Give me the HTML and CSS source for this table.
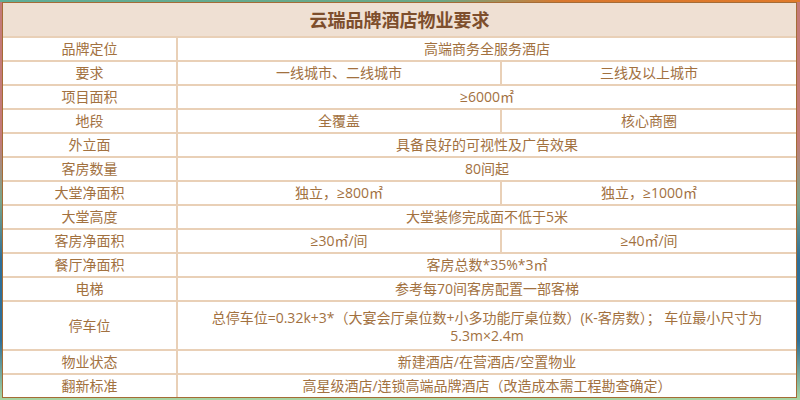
FILE: index.html
```html
<!DOCTYPE html>
<html lang="zh-CN">
<head>
<meta charset="utf-8">
<title>云瑞品牌酒店物业要求</title>
<link rel="stylesheet" href="styles.css">
</head>
<body>
<div class="frame">
  <div class="sheet">
    <div class="cell title span3">云瑞品牌酒店物业要求</div>

    <div class="cell">品牌定位</div>
    <div class="cell span2">高端商务全服务酒店</div>

    <div class="cell">要求</div>
    <div class="cell">一线城市、二线城市</div>
    <div class="cell">三线及以上城市</div>

    <div class="cell">项目面积</div>
    <div class="cell span2">≥6000㎡</div>

    <div class="cell">地段</div>
    <div class="cell">全覆盖</div>
    <div class="cell">核心商圈</div>

    <div class="cell">外立面</div>
    <div class="cell span2">具备良好的可视性及广告效果</div>

    <div class="cell">客房数量</div>
    <div class="cell span2">80间起</div>

    <div class="cell">大堂净面积</div>
    <div class="cell">独立，≥800㎡</div>
    <div class="cell">独立，≥1000㎡</div>

    <div class="cell">大堂高度</div>
    <div class="cell span2">大堂装修完成面不低于5米</div>

    <div class="cell">客房净面积</div>
    <div class="cell">≥30㎡/间</div>
    <div class="cell">≥40㎡/间</div>

    <div class="cell">餐厅净面积</div>
    <div class="cell span2">客房总数*35%*3㎡</div>

    <div class="cell">电梯</div>
    <div class="cell span2">参考每70间客房配置一部客梯</div>

    <div class="cell">停车位</div>
    <div class="cell span2 multi"><span class="line">总停车位=0.32k+3*（大宴会厅桌位数+小多功能厅桌位数）(K-客房数）； 车位最小尺寸为</span><span class="line">5.3m×2.4m</span></div>

    <div class="cell">物业状态</div>
    <div class="cell span2">新建酒店/在营酒店/空置物业</div>

    <div class="cell">翻新标准</div>
    <div class="cell span2">高星级酒店/连锁高端品牌酒店（改造成本需工程勘查确定）</div>
  </div>
</div>
</body>
</html>
```

FILE: styles.css
```css
html, body {
  margin: 0;
  padding: 0;
  width: 800px;
  height: 400px;
  overflow: hidden;
}

body {
  background:
    linear-gradient(to right, #5fae98 0%, #6aa886 55%, #d9782e 70%, #e07a2a 100%) top / 100% 2px no-repeat,
    linear-gradient(to bottom, #c47a78 0%, #c47a78 35%, #7aa58a 50%, #2f6f98 65%, #2f6f98 85%, #a9d6a2 100%);
  font-family: "Open Sans", "Noto Sans CJK SC", sans-serif;
}

.frame {
  margin: 2px 0 0 2px;
  width: 793px;
  border: 1px solid #a56c36;
  background: #fff;
}

.sheet {
  display: grid;
  grid-template-columns: 173px 322px 1fr;
  grid-template-rows: 33px repeat(11, 22px) 47px 22px 22px;
  gap: 2px;
  background: #e9d0b7;
}

.cell {
  background: #fff;
  color: #a2713f;
  font-size: 14px;
  line-height: 22px;
  display: flex;
  align-items: center;
  justify-content: center;
  text-align: center;
  white-space: nowrap;
}

.span2 {
  grid-column: span 2;
}

.span3 {
  grid-column: span 3;
}

.title {
  background: #efe0d3;
  color: #7d4e2c;
  font-size: 18px;
  font-weight: bold;
}

.multi {
  flex-direction: column;
  padding-top: 2px;
}

.line {
  display: block;
  line-height: 18px;
  height: 18px;
}
```
